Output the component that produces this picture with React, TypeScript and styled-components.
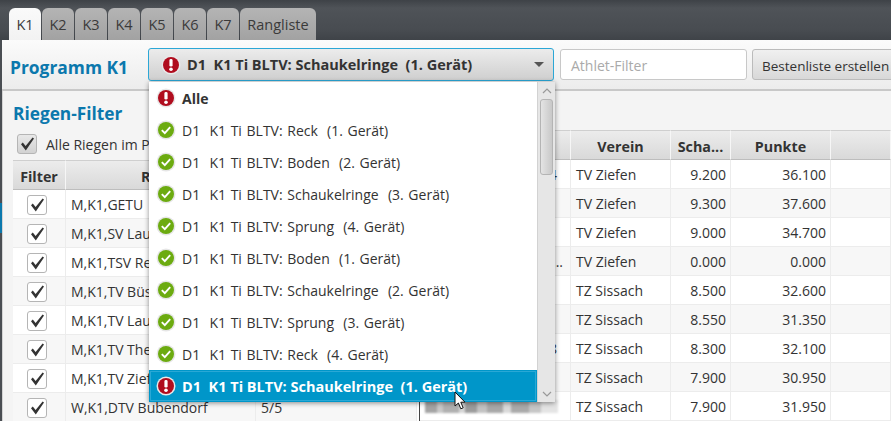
import React from "react";
import styled, { createGlobalStyle } from "styled-components";

const Global = createGlobalStyle`
  html, body { margin: 0; padding: 0; width: 891px; height: 421px; overflow: hidden; background: #f4f4f4; }
  #root { width: 891px; height: 421px; }
  * { box-sizing: border-box; }
`;

const font = `"Open Sans", "Noto Sans", "Liberation Sans", sans-serif`;

const Page = styled.div`
  position: relative;
  width: 891px;
  height: 421px;
  overflow: hidden;
  font-family: ${font};
  font-size: 14px;
  color: #333;
  background: #4a4e53;
  display: flex;
  flex-direction: column;
`;
const TabBar = styled.div`
  height: 40px;
  flex: none;
  display: flex;
  align-items: flex-end;
  gap: 1px;
  padding-left: 9px;
  background: linear-gradient(#3e4247 0, #4f5358 8px, #484c51 30px, #3f4348 100%);
`;
const Tab = styled.div<{ $active?: boolean; $wide?: boolean }>`
  width: ${(p) => (p.$wide ? 76 : 32)}px;
  height: 32px;
  border-radius: 6px 6px 0 0;
  display: flex;
  align-items: center;
  justify-content: center;
  font-size: 14.5px;
  color: #3a3a3a;
  background: ${(p) => (p.$active ? "linear-gradient(#fafafa,#f2f2f2)" : "linear-gradient(#b4b4b4,#a2a2a2)")};
`;
const Body = styled.div`
  flex: 1;
  margin-left: 2px;
  display: flex;
  flex-direction: column;
  background: #f4f4f4;
  min-height: 0;
`;
const SideMark = styled.div`
  position: absolute;
  left: 0;
  top: 203px;
  width: 2px;
  height: 30px;
  background: #0b78ad;
`;
const Toolbar = styled.div`
  height: 51px;
  flex: none;
  display: flex;
  align-items: center;
  padding-left: 8px;
  background: linear-gradient(#fbfbfb, #ececec);
  border-bottom: 2px solid #c8c8c8;
`;
const Title = styled.div`
  width: 138px;
  flex: none;
  margin-top: 5px;
  color: #0b78ad;
  font-weight: 700;
  font-size: 17.4px;
`;
const ComboButton = styled.div`
  width: 406px;
  height: 33px;
  flex: none;
  display: flex;
  align-items: center;
  gap: 6px;
  padding-left: 12px;
  border: 1px solid #2ba7d6;
  border-radius: 3px;
  background: linear-gradient(#ececec, #cfcfcf);
  font-weight: 700;
  font-size: 14.5px;
  white-space: pre;
`;
const Arrow = styled.span`
  margin-left: auto;
  margin-right: 9px;
  width: 0;
  height: 0;
  border-left: 5px solid transparent;
  border-right: 5px solid transparent;
  border-top: 5px solid #555;
`;
const FilterInput = styled.div`
  width: 187px;
  height: 31px;
  flex: none;
  margin-left: 6px;
  border: 1px solid #c8c8c8;
  border-radius: 3px;
  background: #fff;
  color: #aaa;
  padding: 2px 0 0 10px;
  display: flex;
  align-items: center;
`;
const ActionButton = styled.div`
  width: 160px;
  height: 31px;
  flex: none;
  margin-left: 5px;
  border: 1px solid #bbb;
  border-radius: 3px;
  background: linear-gradient(#f0f0f0, #d8d8d8);
  padding: 2px 0 0 9px;
  display: flex;
  align-items: center;
  white-space: nowrap;
  font-size: 13.5px;
`;
const Content = styled.div`
  flex: 1;
  display: flex;
  min-height: 0;
`;
const LeftPane = styled.div`
  width: 418px;
  flex: none;
  padding: 11px 0 0 10px;
  border-left: 1px solid #d4d4d4;
  border-right: 1px solid #444;
`;
const PaneTitle = styled.div`
  color: #0b78ad;
  font-weight: 700;
  font-size: 17.3px;
  height: 24px;
  line-height: 24px;
`;
const CheckRow = styled.div`
  display: flex;
  align-items: center;
  gap: 9px;
  height: 20px;
  margin: 8px 0 6px 4px;
`;
const Check = styled.span<{ $soft?: boolean }>`
  width: 20px;
  height: 20px;
  flex: none;
  display: flex;
  align-items: center;
  justify-content: center;
  border: 1px solid #b5b5b5;
  border-radius: 3px;
  background: ${(p) => (p.$soft ? "linear-gradient(#e8e8e8,#d2d2d2)" : "#fff")};
  svg { display: block; }
`;
const Table = styled.div<{ $cols: string }>`
  display: grid;
  grid-template-columns: ${(p) => p.$cols};
  grid-auto-rows: 29px;
  grid-template-rows: 30px;
  background: #fff;
`;
const Head = styled.div`
  display: flex;
  align-items: center;
  justify-content: center;
  padding-top: 2px;
  font-weight: 700;
  font-size: 14.3px;
  color: #333;
  background: linear-gradient(#ececec, #d9d9d9);
  border-right: 1px solid #f6f6f6;
  border-top: 1px solid #cfcfcf;
  border-bottom: 1px solid #bdbdbd;
  white-space: nowrap;
  overflow: hidden;
`;
const Cell = styled.div<{ $odd?: boolean; $right?: boolean; $center?: boolean; $gap?: number }>`
  display: flex;
  align-items: center;
  padding: 1px ${(p) => p.$gap ?? 4}px 0 5px;
  justify-content: ${(p) => (p.$right ? "flex-end" : p.$center ? "center" : "flex-start")};
  background: ${(p) => (p.$odd ? "#f7f7f7" : "#fff")};
  border-right: 1px solid #ececec;
  border-bottom: 1px solid #ececec;
  white-space: nowrap;
  overflow: hidden;
`;
const RightPane = styled.div`
  flex: 1;
  min-width: 0;
  padding-top: 39px;
`;
const Blur = styled.span`
  width: 133px;
  height: 13px;
  flex: none;
  background: linear-gradient(
    90deg,
    #a4a4a4 0 12px, #c8c8c8 12px 18px, #b0b0b0 18px 34px, #d6d6d6 34px 40px, #9c9c9c 40px 52px,
    #c2c2c2 52px 62px, #a8a8a8 62px 78px, #dadada 78px 86px, #aaaaaa 86px 104px, #c6c6c6 104px 116px, #e4e4e4 116px 133px
  );
  filter: blur(1px);
`;
const Popup = styled.div`
  position: absolute;
  left: 149px;
  top: 82px;
  width: 406px;
  height: 320px;
  display: flex;
  background: #fff;
  box-shadow: 0 1px 5px rgba(0, 0, 0, 0.45);
`;
const List = styled.div`
  width: 388px;
  flex: none;
  display: flex;
  flex-direction: column;
`;
const Item = styled.div<{ $selected?: boolean; $bold?: boolean }>`
  height: 32px;
  flex: none;
  display: flex;
  align-items: center;
  gap: 6px;
  padding-left: 7px;
  white-space: pre;
  font-weight: ${(p) => (p.$bold || p.$selected ? 700 : 400)};
  font-size: ${(p) => (p.$selected ? 14.5 : 14)}px;
  word-spacing: ${(p) => (p.$selected || p.$bold ? 0 : 1)}px;
  color: ${(p) => (p.$selected ? "#fff" : "#333")};
  background: ${(p) => (p.$selected ? "#0096c9" : "#fff")};
  outline: ${(p) => (p.$selected ? "1px solid #2aa8d5" : "none")};
  outline-offset: -2px;
`;
const Scroll = styled.div`
  flex: 1;
  position: relative;
  display: flex;
  flex-direction: column;
  background: #e6e6e6;
  border-left: 1px solid #d2d2d2;
`;
const ScrollArrow = styled.div`
  height: 17px;
  flex: none;
  display: flex;
  align-items: center;
  justify-content: center;
`;
const Thumb = styled.div`
  height: 76px;
  flex: none;
  margin: 0 2px;
  border: 1px solid #b4b4b4;
  border-radius: 3px;
  background: linear-gradient(90deg, #e4e4e4, #c8c8c8);
`;
const ScrollSpace = styled.div`
  flex: 1;
`;
const Cursor = styled.svg`
  position: absolute;
  left: 454px;
  top: 391px;
`;

const Warn = ({ size = 20 }: { size?: number }) => (
  <svg width={size} height={size} viewBox="0 0 20 20" style={{ flex: "none" }}>
    <circle cx="10" cy="10" r="9.5" fill="#e9e9e9" />
    <circle cx="10" cy="10" r="8" fill="#b00d1e" />
    <rect x="8.4" y="4" width="3.2" height="7.6" rx="1.4" fill="#fff" />
    <circle cx="10" cy="14.3" r="1.8" fill="#fff" />
  </svg>
);
const Ok = () => (
  <svg width="20" height="20" viewBox="0 0 20 20" style={{ flex: "none" }}>
    <circle cx="10" cy="10" r="9.5" fill="#e6e6e6" />
    <circle cx="10" cy="10" r="8" fill="#6cab10" />
    <path d="M5.8 10.2l3 3 5.4-6" fill="none" stroke="#fff" strokeWidth="1.9" />
  </svg>
);
const Tick = () => (
  <svg width="18" height="18" viewBox="0 0 18 18">
    <path d="M3 9.2l1.8-1.6L7.6 11 14.6 2.4 16 3.6 7.8 15.6z" fill="#333" />
  </svg>
);
const Chevron = ({ up }: { up?: boolean }) => (
  <svg width="10" height="6" viewBox="0 0 10 6">
    <path d={up ? "M1 5l4-4 4 4" : "M1 1l4 4 4-4"} fill="none" stroke="#999" strokeWidth="1.2" />
  </svg>
);

const riegen = [
  ["M,K1,GETU", ""],
  ["M,K1,SV Lausen", ""],
  ["M,K1,TSV Reigoldswil", ""],
  ["M,K1,TV Büsserach", ""],
  ["M,K1,TV Laufen", ""],
  ["M,K1,TV Therwil", ""],
  ["M,K1,TV Ziefen", ""],
  ["W,K1,DTV Bubendorf", "5/5"],
];
const results = [
  ["4", "TV Ziefen", "9.200", "36.100", 13],
  ["", "TV Ziefen", "9.300", "37.600", 13],
  ["", "TV Ziefen", "9.000", "34.700", 13],
  ["...", "TV Ziefen", "0.000", "0.000", 7],
  ["", "TZ Sissach", "8.500", "32.600", 13],
  ["", "TZ Sissach", "8.550", "31.350", 13],
  ["8", "TZ Sissach", "8.300", "32.100", 13],
  ["", "TZ Sissach", "7.900", "30.950", 13],
  ["", "TZ Sissach", "7.900", "31.950", 13],
] as const;
const options = [
  "D1  K1 Ti BLTV: Reck  (1. Gerät)",
  "D1  K1 Ti BLTV: Boden  (2. Gerät)",
  "D1  K1 Ti BLTV: Schaukelringe  (3. Gerät)",
  "D1  K1 Ti BLTV: Sprung  (4. Gerät)",
  "D1  K1 Ti BLTV: Boden  (1. Gerät)",
  "D1  K1 Ti BLTV: Schaukelringe  (2. Gerät)",
  "D1  K1 Ti BLTV: Sprung  (3. Gerät)",
  "D1  K1 Ti BLTV: Reck  (4. Gerät)",
];
const current = "D1  K1 Ti BLTV: Schaukelringe  (1. Gerät)";

export default function App() {
  return (
    <Page>
      <Global />
      <SideMark />
      <TabBar>
        {["K1", "K2", "K3", "K4", "K5", "K6", "K7"].map((t, i) => (
          <Tab key={t} $active={i === 0}>{t}</Tab>
        ))}
        <Tab $wide>Rangliste</Tab>
      </TabBar>
      <Body>
        <Toolbar>
          <Title>Programm K1</Title>
          <ComboButton>
            <Warn />
            {current}
            <Arrow />
          </ComboButton>
          <FilterInput>Athlet-Filter</FilterInput>
          <ActionButton>Bestenliste erstellen</ActionButton>
        </Toolbar>
        <Content>
          <LeftPane>
            <PaneTitle>Riegen-Filter</PaneTitle>
            <CheckRow>
              <Check $soft><Tick /></Check>
              Alle Riegen im Programm
            </CheckRow>
            <Table $cols="53px 190px 161px">
              <Head>Filter</Head>
              <Head>Riege</Head>
              <Head>Status</Head>
              {riegen.map((r, i) => (
                <React.Fragment key={i}>
                  <Cell $center $gap={9} $odd={i % 2 === 1}><Check><Tick /></Check></Cell>
                  <Cell $odd={i % 2 === 1}>{r[0]}</Cell>
                  <Cell $odd={i % 2 === 1}>{r[1]}</Cell>
                </React.Fragment>
              ))}
            </Table>
          </LeftPane>
          <RightPane>
            <Table $cols="151px 100px 60px 100px 1fr">
              <Head>Athlet</Head>
              <Head>Verein</Head>
              <Head>Scha...</Head>
              <Head>Punkte</Head>
              <Head />
              {results.map((r, i) => (
                <React.Fragment key={i}>
                  <Cell $right={i !== 8} $gap={r[4]} $odd={i % 2 === 1}>{i === 8 ? <Blur /> : r[0]}</Cell>
                  <Cell $odd={i % 2 === 1}>{r[1]}</Cell>
                  <Cell $right $odd={i % 2 === 1}>{r[2]}</Cell>
                  <Cell $right $odd={i % 2 === 1}>{r[3]}</Cell>
                  <Cell $odd={i % 2 === 1} />
                </React.Fragment>
              ))}
            </Table>
          </RightPane>
        </Content>
      </Body>
      <Popup>
        <List>
          <Item $bold><Warn />Alle</Item>
          {options.map((o) => (
            <Item key={o}><Ok />{o}</Item>
          ))}
          <Item $selected><Warn />{current}</Item>
        </List>
        <Scroll>
          <ScrollArrow><Chevron up /></ScrollArrow>
          <Thumb />
          <ScrollSpace />
          <ScrollArrow><Chevron /></ScrollArrow>
        </Scroll>
      </Popup>
      <Cursor width="14" height="20" viewBox="0 0 14 20">
        <path d="M1 1v14l3.4-3 2.4 5.8 2.4-1-2.4-5.6H11z" fill="#fff" stroke="#111" strokeWidth="1" />
      </Cursor>
    </Page>
  );
}
